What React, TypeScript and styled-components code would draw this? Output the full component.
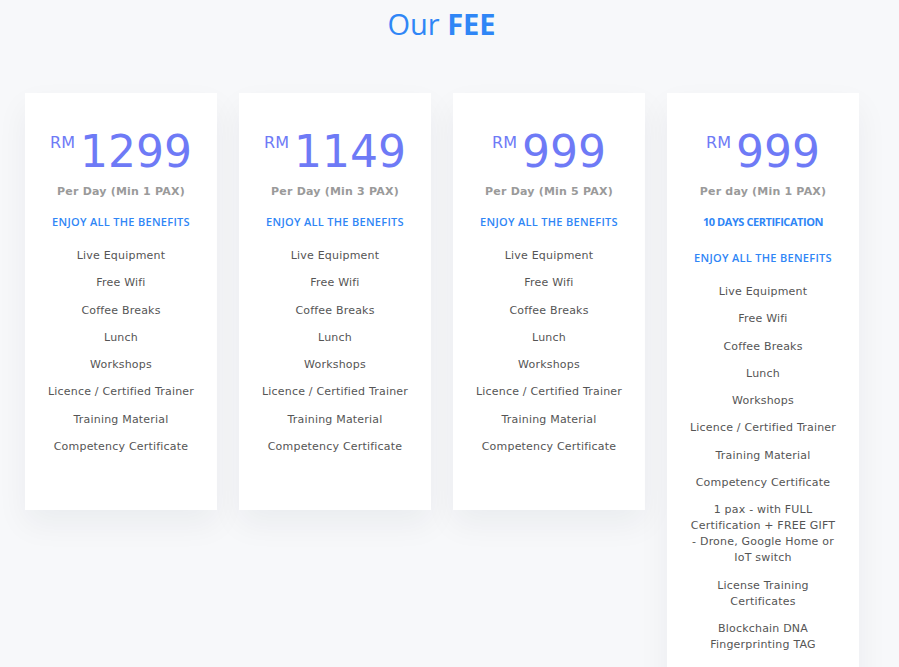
import React from "react";
import styled, { createGlobalStyle } from "styled-components";

const Global = createGlobalStyle`
  html, body { margin: 0; padding: 0; overflow: hidden; }
  body { background: #f7f8fa; font-family: "DejaVu Sans", Verdana, sans-serif; }
  * { box-sizing: border-box; }
`;

const Page = styled.div`
  width: 883px;
  min-height: 100vh;
  background: #f7f8fa;
  padding-top: 5px;
`;

const Title = styled.h2`
  margin: 0;
  text-align: center;
  font-family: "Open Sans", "Noto Sans", sans-serif;
  font-weight: 400;
  font-size: 29px;
  line-height: 38px;
  color: #2f86f6;
  b { font-weight: 700; }
`;

const Row = styled.div`
  display: flex;
  align-items: flex-start;
  gap: 22px;
  padding-left: 25px;
  margin-top: 50px;
`;

const Card = styled.div`
  width: 192px;
  min-height: 417px;
  background: #ffffff;
  box-shadow: 0 14px 30px rgba(20, 30, 60, 0.055);
  text-align: center;
  padding: 37px 21px 44px;
`;

const PriceRow = styled.div`
  display: flex;
  justify-content: center;
  align-items: flex-start;
  color: #6e7af6;
`;

const Currency = styled.span`
  font-size: 16px;
  line-height: 16px;
  margin-top: 5px;
  margin-right: 5px;
`;

const Amount = styled.span`
  font-size: 44px;
  line-height: 44px;
`;

const Sub = styled.div`
  margin-top: 10px;
  font-size: 11px;
  font-weight: 700;
  letter-spacing: 0.2px;
  line-height: 16px;
  color: #9a9a9a;
`;

const Highlight = styled.div<{ $strong?: boolean; $gap: number }>`
  margin-top: ${(p) => p.$gap}px;
  font-family: "Open Sans", "Noto Sans", sans-serif;
  font-size: 11px;
  font-weight: ${(p) => (p.$strong ? 700 : 600)};
  letter-spacing: ${(p) => (p.$strong ? "-0.45px" : "0.3px")};
  line-height: 16px;
  color: #2f86f6;
  white-space: nowrap;
`;

const List = styled.ul`
  list-style: none;
  margin: 18px 0 0;
  padding: 0;
`;

const Item = styled.li`
  font-size: 11px;
  line-height: 16px;
  letter-spacing: 0.2px;
  color: #555555;
  margin-bottom: 11.3px;
`;

const base = [
  "Live Equipment",
  "Free Wifi",
  "Coffee Breaks",
  "Lunch",
  "Workshops",
  "Licence / Certified Trainer",
  "Training Material",
  "Competency Certificate",
];

type Plan = {
  price: string;
  sub: string;
  badge?: string;
  extras?: string[];
};

const plans: Plan[] = [
  { price: "1299", sub: "Per Day (Min 1 PAX)" },
  { price: "1149", sub: "Per Day (Min 3 PAX)" },
  { price: "999", sub: "Per Day (Min 5 PAX)" },
  {
    price: "999",
    sub: "Per day (Min 1 PAX)",
    badge: "10 DAYS CERTIFICATION",
    extras: [
      "1 pax - with FULL Certification + FREE GIFT - Drone, Google Home or IoT switch",
      "License Training Certificates",
      "Blockchain DNA Fingerprinting TAG",
    ],
  },
];

export default function App() {
  return (
    <>
      <Global />
      <Page>
        <Title>
          Our <b>FEE</b>
        </Title>
        <Row>
          {plans.map((p, i) => (
            <Card key={i}>
              <PriceRow>
                <Currency>RM</Currency>
                <Amount>{p.price}</Amount>
              </PriceRow>
              <Sub>{p.sub}</Sub>
              {p.badge && (
                <Highlight $strong $gap={14}>
                  {p.badge}
                </Highlight>
              )}
              <Highlight $gap={p.badge ? 20 : 14}>ENJOY ALL THE BENEFITS</Highlight>
              <List>
                {[...base, ...(p.extras ?? [])].map((t) => (
                  <Item key={t}>{t}</Item>
                ))}
              </List>
            </Card>
          ))}
        </Row>
      </Page>
    </>
  );
}
